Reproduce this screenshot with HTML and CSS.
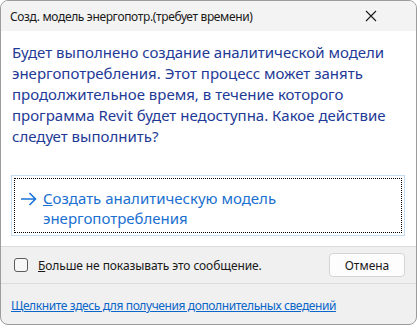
FILE: index.html
```html
<!DOCTYPE html>
<html lang="ru">
<head>
    <meta charset="UTF-8">
    <title>Создать модель энергопотребления</title>
    <link rel="stylesheet" href="styles.css">
</head>
<body>
    <div class="window">
        <div class="titlebar">
            <span class="title">Созд. модель энергопотр.(требует времени)</span>
            <svg class="close" width="12" height="12" viewBox="0 0 12 12">
                <path d="M1 1 L11 11 M11 1 L1 11" stroke="#1a1a1a" stroke-width="1.1" fill="none"/>
            </svg>
        </div>
        <div class="content">
            <p class="main-text">Будет выполнено создание аналитической модели энергопотребления. Этот процесс может занять продолжительное время, в течение которого программа Revit будет недоступна. Какое действие следует выполнить?</p>
            <div class="command-link">
                <div class="command-inner">
                    <svg class="arrow" width="17" height="14" viewBox="0 0 17 14">
                        <path d="M1 7 H15.5 M9.5 1 L15.5 7 L9.5 13" stroke="#1a73d9" stroke-width="1.6" fill="none"/>
                    </svg>
                    <span class="command-text"><u>С</u>оздать аналитическую модель энергопотребления</span>
                </div>
            </div>
        </div>
        <div class="footer">
            <label class="check">
                <span class="box"></span>
                <span><u>Б</u>ольше не показывать это сообщение.</span>
            </label>
            <button class="cancel">Отмена</button>
        </div>
        <div class="more">
            <a href="#">Щелкните здесь для получения дополнительных сведений</a>
        </div>
    </div>
</body>
</html>
```
FILE: styles.css
```css
body {
    margin: 0;
    padding: 0;
    font-family: 'Noto Sans', 'Open Sans', sans-serif;
    background-color: #ffffff;
}
.window {
    width: 417px;
    height: 325px;
    box-sizing: border-box;
    border: 1px solid #9c9c9c;
    border-radius: 8px;
    overflow: hidden;
    display: flex;
    flex-direction: column;
    background-color: #f0f0f0;
}
.titlebar {
    height: 30px;
    background-color: #f3f3f3;
    display: flex;
    align-items: center;
    justify-content: space-between;
    padding: 0 39px 0 9px;
    flex-shrink: 0;
}
.title {
    font-size: 12px;
    letter-spacing: -0.35px;
    color: #1a1a1a;
}
.content {
    background-color: #ffffff;
    padding: 11px 11px 10px 10px;
    border-bottom: 1px solid #dcdcdc;
}
.main-text {
    margin: 0 0 28px 1px;
    font-size: 15px;
    line-height: 21px;
    color: #1e3a96;
}
.command-link {
    border: 1px solid #c4dcf2;
    padding: 2px;
}
.command-inner {
    border: 1px dotted #000000;
    display: flex;
    align-items: flex-start;
    padding: 9px 8px 4px 5px;
}
.arrow {
    margin-top: 4px;
    margin-right: 6px;
    flex-shrink: 0;
}
.command-text {
    font-size: 15px;
    line-height: 20px;
    color: #1a6fd0;
    width: 300px;
}
.footer {
    height: 39px;
    display: flex;
    align-items: center;
    justify-content: space-between;
    padding: 0 11px 0 13px;
    border-bottom: 1px solid #dcdcdc;
}
.check {
    display: flex;
    align-items: center;
    font-size: 12px;
    letter-spacing: -0.1px;
    color: #1a1a1a;
}
.box {
    width: 12px;
    height: 12px;
    border: 1px solid #5c5c5c;
    border-radius: 3px;
    background-color: #f7f7f7;
    margin-right: 10px;
}
.cancel {
    width: 76px;
    height: 24px;
    font-family: 'Noto Sans', 'Open Sans', sans-serif;
    font-size: 12px;
    color: #1a1a1a;
    background-color: #fdfdfd;
    border: 1px solid #d4d4d4;
    border-radius: 4px;
}
.more {
    padding: 9px 10px;
}
.more a {
    font-size: 12px;
    letter-spacing: -0.4px;
    color: #0a66c9;
}
```
